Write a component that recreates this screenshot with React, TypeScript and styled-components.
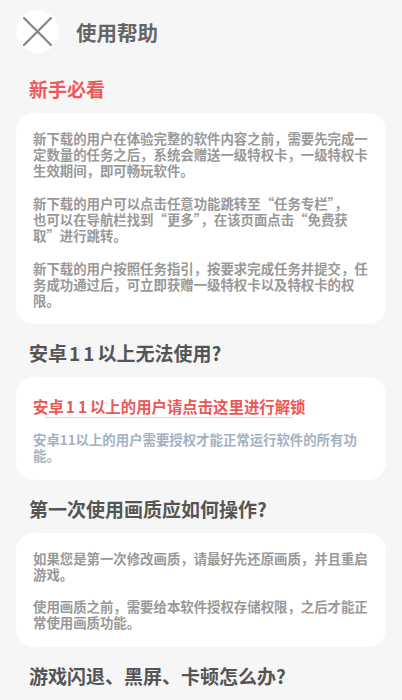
import React from "react";
import styled, { createGlobalStyle } from "styled-components";

const GlobalStyle = createGlobalStyle`
    body {
        margin: 0;
        background: #f6f6f6;
        font-family: "Noto Sans CJK SC", "Noto Sans", sans-serif;
    }
`;

const Page = styled.div`
    padding: 10px 16px 0;
    height: 700px;
    box-sizing: border-box;
    overflow: hidden;
`;

const Header = styled.div`
    display: flex;
    align-items: center;
    height: 43px;
`;

const CloseButton = styled.button`
    width: 43px;
    height: 43px;
    border-radius: 50%;
    border: none;
    padding: 0;
    background: #fff;
    display: flex;
    align-items: center;
    justify-content: center;
    cursor: pointer;
    flex-shrink: 0;
`;

const Title = styled.h1`
    margin: 0 0 0 17px;
    font-size: 20.5px;
    font-weight: 700;
    color: #666;
    line-height: 26px;
`;

const SectionTitle = styled.h2<{ $accent?: boolean; $first?: boolean }>`
    margin: ${(p) => (p.$first ? "23px" : "16px")} 0 11px 13px;
    font-size: 19px;
    line-height: 26px;
    font-weight: 700;
    color: ${(p) => (p.$accent ? "#ec5b5b" : "#555")};
`;

// the digits are spaced wider in the reference's font
const Num = styled.span`
    letter-spacing: 3px;
    margin-left: 2px;
`;

const Card = styled.div<{ $minHeight?: number }>`
    background: #fff;
    border-radius: 18px;
    padding: 17px 17px 16px;
    min-height: ${(p) => (p.$minHeight ? `${p.$minHeight}px` : "auto")};
`;

const Para = styled.p<{ $tone?: "gray" | "blue" }>`
    margin: 0;
    font-size: 13.4px;
    line-height: 16.2px;
    font-weight: 700;
    white-space: nowrap;
    color: ${(p) => (p.$tone === "blue" ? "#a3b2c3" : "#999")};

    & + & {
        margin-top: 16.2px;
    }
`;

const UnlockLink = styled.a`
    position: relative;
    display: inline-block;
    font-size: 15.4px;
    line-height: 20px;
    font-weight: 700;
    color: #ec5656;
    text-decoration: none;
    margin-bottom: 15px;
    cursor: pointer;

    &::after {
        content: "";
        position: absolute;
        left: 12px;
        right: 12px;
        bottom: -2px;
        height: 1px;
        background: #f4c9cc;
    }
`;

const CloseIcon = () => (
    <svg width="43" height="43" viewBox="0 0 43 43">
        <path d="M8 8 L35 35 M35 8 L8 35" stroke="#858585" strokeWidth="2.2" strokeLinecap="round" fill="none" />
    </svg>
);

const Lines = ({ lines, tone }: { lines: string[]; tone?: "gray" | "blue" }) => (
    <Para $tone={tone}>
        {lines.map((l, i) => (
            <React.Fragment key={i}>
                {i > 0 && <br />}
                {l}
            </React.Fragment>
        ))}
    </Para>
);

const App = () => {
    return (
        <Page>
            <GlobalStyle />
            <Header>
                <CloseButton aria-label="关闭">
                    <CloseIcon />
                </CloseButton>
                <Title>使用帮助</Title>
            </Header>

            <SectionTitle $accent $first>新手必看</SectionTitle>
            <Card>
                <Lines
                    lines={[
                        "新下载的用户在体验完整的软件内容之前，需要先完成一",
                        "定数量的任务之后，系统会赠送一级特权卡，一级特权卡",
                        "生效期间，即可畅玩软件。",
                    ]}
                />
                <Lines
                    lines={[
                        "新下载的用户可以点击任意功能跳转至“任务专栏”，",
                        "也可以在导航栏找到“更多”，在该页面点击“免费获",
                        "取”进行跳转。",
                    ]}
                />
                <Lines
                    lines={[
                        "新下载的用户按照任务指引，按要求完成任务并提交，任",
                        "务成功通过后，可立即获赠一级特权卡以及特权卡的权",
                        "限。",
                    ]}
                />
            </Card>

            <SectionTitle>
                安卓<Num>11</Num>以上无法使用?
            </SectionTitle>
            <Card>
                <UnlockLink>
                    安卓<Num>11</Num>以上的用户请点击这里进行解锁
                </UnlockLink>
                <Lines
                    tone="blue"
                    lines={["安卓11以上的用户需要授权才能正常运行软件的所有功", "能。"]}
                />
            </Card>

            <SectionTitle>第一次使用画质应如何操作?</SectionTitle>
            <Card>
                <Lines lines={["如果您是第一次修改画质，请最好先还原画质，并且重启", "游戏。"]} />
                <Lines lines={["使用画质之前，需要给本软件授权存储权限，之后才能正", "常使用画质功能。"]} />
            </Card>

            <SectionTitle>游戏闪退、黑屏、卡顿怎么办?</SectionTitle>
            <Card $minHeight={80} />
        </Page>
    );
};

export default App;
